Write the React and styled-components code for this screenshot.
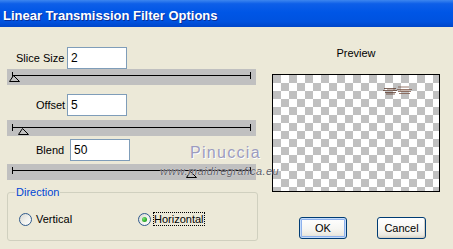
import React from 'react';
import styled, { createGlobalStyle } from 'styled-components';

const Global = createGlobalStyle`
  html, body { margin: 0; padding: 0; }
  body {
    background: #ece9d8;
    font-family: "Liberation Sans", Arial, sans-serif;
    font-size: 11px;
    color: #000;
  }
`;

const Window = styled.div`
  position: relative;
  width: 453px;
  height: 249px;
  background: #ece9d8;
  overflow: hidden;
`;

const TitleBar = styled.div`
  height: 27px;
  box-sizing: border-box;
  padding: 8px 0 0 3px;
  line-height: 15px;
  background: linear-gradient(to bottom, #3d86ef 0%, #0e5fe8 14%, #0056e6 45%, #0052df 80%, #0046c9 100%);
  color: #fff;
  font: bold 13px/15px "Liberation Sans", Arial, sans-serif;
  text-shadow: 1px 1px 0 #0b2f95;
  white-space: nowrap;
`;

const Body = styled.div`
  display: flex;
  padding-left: 7px;
`;

const LeftColumn = styled.div`
  width: 251px;
  padding-top: 20px;
  display: flex;
  flex-direction: column;
`;

const RightColumn = styled.div`
  width: 168px;
  margin-left: 14px;
  padding-top: 20px;
  display: flex;
  flex-direction: column;
`;

const FieldRow = styled.div`
  display: flex;
  align-items: center;
  height: 22px;
  margin-top: ${p => p.$top}px;
  padding-left: ${p => p.$indent}px;
`;

const FieldLabel = styled.label`
  width: ${p => p.$width}px;
  white-space: nowrap;
  line-height: 13px;
`;

const NumberInput = styled.input`
  box-sizing: border-box;
  width: 60px;
  height: 22px;
  margin: 0;
  border: 1px solid #7f9db9;
  padding: 0 3px;
  font: 12px "Liberation Sans", Arial, sans-serif;
  color: #000;
  background: #fff;
  outline: none;
`;

const SliderBand = styled.div`
  position: relative;
  width: 249px;
  height: 16px;
  margin-top: ${p => p.$top}px;
  background: #c0c0c0;
  padding-top: ${p => p.$line}px;
  box-sizing: border-box;
`;

const Track = styled.div`
  position: relative;
  margin-left: 5px;
  width: 239px;
  height: 1px;
  background: #000;

  &::before,
  &::after {
    content: "";
    position: absolute;
    top: -3px;
    width: 1px;
    height: 7px;
    background: #000;
  }
  &::before { left: 0; }
  &::after { right: 0; }
`;

const Thumb = styled.svg`
  position: absolute;
  left: ${p => p.$pos}px;
  top: ${p => p.$line + p.$drop}px;
  width: 11px;
  height: 7px;
`;

const GroupBox = styled.fieldset`
  margin: 6px 0 0 0;
  width: 251px;
  box-sizing: border-box;
  border: 1px solid #d0d0bf;
  border-radius: 3px;
  padding: 0 7px 14px;
  min-width: 0;
`;

const GroupLegend = styled.legend`
  color: #0046d5;
  padding: 0 1px;
  line-height: 13px;
`;

const OptionRow = styled.div`
  display: flex;
  margin-top: 13px;
  padding-left: 4px;
`;

const Option = styled.label`
  display: flex;
  align-items: center;
  gap: ${p => p.$gap}px;
  width: ${p => p.$w}px;
  height: 14px;
`;

const RadioCircle = styled.span`
  flex: none;
  width: 13px;
  height: 13px;
  box-sizing: border-box;
  border-radius: 50%;
  border: 1px solid #2f5a8c;
  background: linear-gradient(135deg, #d8d8d2 0%, #f2f2ee 55%, #ffffff 100%);
  display: flex;
  align-items: center;
  justify-content: center;

  &::after {
    content: "";
    display: ${p => (p.$checked ? 'block' : 'none')};
    width: 5px;
    height: 5px;
    border-radius: 50%;
    background: radial-gradient(circle at 35% 35%, #7ce07a 0%, #2fb12c 55%, #1b8e19 100%);
  }
`;

const OptionText = styled.span`
  line-height: 12px;
  white-space: nowrap;
  border: 1px ${p => (p.$focus ? 'dotted #000' : 'solid transparent')};
`;

const PreviewLabel = styled.div`
  text-align: center;
  line-height: 13px;
`;

const PreviewBox = styled.div`
  position: relative;
  margin-top: 14px;
  height: 118px;
  box-sizing: border-box;
  border: 1px solid #000;
  background: repeating-conic-gradient(#ffffff 0 25%, #c0c0c0 0 50%) 0 0 / 16px 16px;
`;

const Streaks = styled.svg`
  position: absolute;
  left: 110px;
  top: 10px;
  width: 30px;
  height: 11px;
`;

const ButtonRow = styled.div`
  display: flex;
  gap: 30px;
  margin-top: 25px;
  padding-left: 27px;
`;

const Button = styled.button`
  width: ${p => p.$w}px;
  height: 22px;
  margin: 0;
  padding: 0;
  border: 1px solid #003c74;
  border-radius: 3px;
  background: linear-gradient(to bottom, #ffffff 0%, #f6f6f2 55%, #ebe9e0 85%, #d8d3c7 100%);
  font: 11px "Liberation Sans", Arial, sans-serif;
  color: #000;
  box-shadow: ${p =>
    p.$default
      ? 'inset 0 0 0 1px #c4dcfb, inset 0 0 0 2px #8eb1ec'
      : 'inset -1px -1px 0 #d6d0c5'};
`;

const Watermark = styled.div`
  position: absolute;
  left: 190px;
  top: 144px;
  font: 16px/18px "Liberation Sans", Arial, sans-serif;
  letter-spacing: 1.3px;
  color: #9c9cbf;
  text-shadow: 1px 1px 0 #ffffff;
  pointer-events: none;
  white-space: nowrap;
`;

const WatermarkUrl = styled.div`
  position: absolute;
  left: 160px;
  top: 165px;
  font: italic 11px/13px "Liberation Sans", Arial, sans-serif;
  letter-spacing: 0.4px;
  color: #5e5e66;
  text-shadow: 0 0 1px #ffffff;
  pointer-events: none;
  white-space: nowrap;
`;

const sliders = {
  slice: { top: 0, line: 6, pos: 2, drop: 0 },
  offset: { top: 4, line: 7, pos: 11, drop: 1 },
  blend: { top: 3, line: 6, pos: 179, drop: 1 },
};

function Slider({ top, line, pos, drop }) {
  return (
    <SliderBand $top={top} $line={line}>
      <Track />
      <Thumb $pos={pos} $line={line} $drop={drop} viewBox="0 0 11 7">
        <polygon points="4.5,0.5 0.5,6.5 10.5,6.5" fill="#c0c0c0" stroke="#000" strokeWidth="1" />
      </Thumb>
    </SliderBand>
  );
}

export default function App() {
  return (
    <>
      <Global />
      <Window>
        <TitleBar>Linear Transmission Filter Options</TitleBar>
        <Body>
          <LeftColumn>
            <FieldRow $top={0} $indent={9}>
              <FieldLabel $width={51}>Slice Size</FieldLabel>
              <NumberInput readOnly value="2" />
            </FieldRow>
            <Slider {...sliders.slice} />
            <FieldRow $top={9} $indent={29}>
              <FieldLabel $width={31}>Offset</FieldLabel>
              <NumberInput readOnly value="5" />
            </FieldRow>
            <Slider {...sliders.offset} />
            <FieldRow $top={3} $indent={29}>
              <FieldLabel $width={34}>Blend</FieldLabel>
              <NumberInput readOnly value="50" />
            </FieldRow>
            <Slider {...sliders.blend} />
            <GroupBox>
              <GroupLegend>Direction</GroupLegend>
              <OptionRow>
                <Option $w={119} $gap={3}>
                  <RadioCircle />
                  <OptionText>Vertical</OptionText>
                </Option>
                <Option $w={80} $gap={2}>
                  <RadioCircle $checked />
                  <OptionText $focus>Horizontal</OptionText>
                </Option>
              </OptionRow>
            </GroupBox>
          </LeftColumn>
          <RightColumn>
            <PreviewLabel>Preview</PreviewLabel>
            <PreviewBox>
              <Streaks viewBox="0 0 30 11">
                <path d="M1 3.5 H13 M0 5.5 H14 M2 7.5 H13 M3 9 H12" stroke="#5b3a2c" strokeWidth="0.9" opacity="0.85" />
                <path d="M15 2 H26 M14 4.5 H29 M15 6.5 H28 M16 8.5 H27" stroke="#7a5444" strokeWidth="0.9" opacity="0.85" />
                <path d="M4 4.5 H12 M17 5.5 H26" stroke="#a08070" strokeWidth="0.8" opacity="0.7" />
              </Streaks>
            </PreviewBox>
            <ButtonRow>
              <Button $w={48} $default>OK</Button>
              <Button $w={49}>Cancel</Button>
            </ButtonRow>
          </RightColumn>
        </Body>
        <Watermark>Pinuccia</Watermark>
        <WatermarkUrl>www.maidiregrafica.eu</WatermarkUrl>
      </Window>
    </>
  );
}
